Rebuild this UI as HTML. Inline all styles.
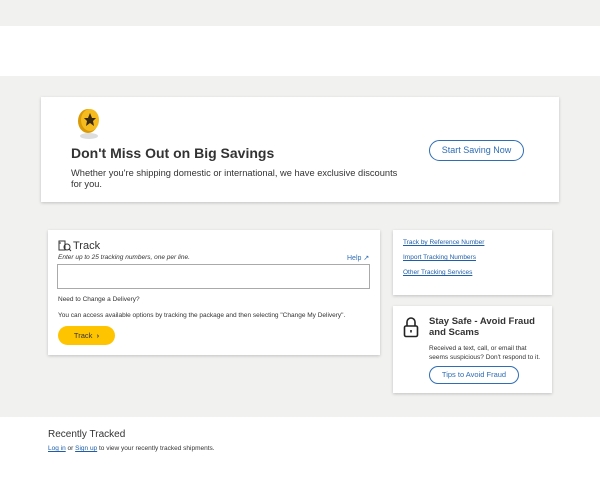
<!DOCTYPE html>
<html><head><style>
*{margin:0;padding:0;box-sizing:border-box}
body{width:600px;height:480px;overflow:hidden;background:#fff;font-family:"Liberation Sans",sans-serif;color:#242424;position:relative}
.g{position:absolute;left:0;width:600px;background:#f1f1f0}
.card{position:absolute;background:#fff;box-shadow:0 1px 3px rgba(0,0,0,.2)}
a{color:#1f5ea8;text-decoration:underline}
.t{position:absolute;white-space:nowrap}
.btn{position:absolute;border:1.5px solid #2f6db5;border-radius:12px;color:#2f6db5;font-size:9px;text-align:center}
</style></head><body>
<div class="g" style="top:0;height:26px"></div>
<div class="g" style="top:76px;height:341px"></div>

<div class="card" style="left:41px;top:97px;width:518px;height:105px">
<svg style="position:absolute;left:34px;top:10px" width="28" height="34" viewBox="0 0 28 34">
<ellipse cx="14" cy="29" rx="9" ry="3" fill="#ddd"/>
<ellipse cx="13" cy="14" rx="10" ry="12" fill="#d99a06"/>
<ellipse cx="15" cy="13" rx="9" ry="11" fill="#f5bb1f"/>
<path d="M15 6l2 5 4 0-3 3 1 5-4-3-4 3 1-5-3-3 4 0z" fill="#3a2a10"/>
</svg>
<div class="t" style="left:30px;top:48px;font-size:14px;font-weight:bold;color:#333">Don't Miss Out on Big Savings</div>
<div class="t" style="left:30px;top:71px;font-size:9.3px;line-height:11px;color:#333">Whether you're shipping domestic or international, we have exclusive discounts<br>for you.</div>
<div class="btn" style="left:388px;top:43px;width:95px;height:21px;line-height:18px">Start Saving Now</div>
</div>

<div class="card" style="left:48px;top:230px;width:332px;height:125px">
<svg style="position:absolute;left:10px;top:10px" width="14" height="12" viewBox="0 0 14 12" fill="none" stroke="#333" stroke-width="1"><path d="M1 1h6v9H1zM1 3h2"/><circle cx="9" cy="7" r="3"/><path d="M11 9l2 2"/></svg>
<div class="t" style="left:25px;top:10px;font-size:11px;color:#333">Track</div>
<div class="t" style="left:10px;top:24px;font-size:6.5px;font-style:italic;color:#333">Enter up to 25 tracking numbers, one per line.</div>
<div class="t" style="left:299px;top:24px;font-size:7px;color:#2f6db5">Help ↗</div>
<div style="position:absolute;left:9px;top:34px;width:313px;height:25px;border:1px solid #aaa"></div>
<div class="t" style="left:10px;top:66px;font-size:6.5px;color:#333">Need to Change a Delivery?</div>
<div class="t" style="left:10px;top:82px;font-size:6.5px;color:#333">You can access available options by tracking the package and then selecting "Change My Delivery".</div>
<div style="position:absolute;left:10px;top:96px;width:57px;height:19px;border-radius:10px;background:#ffc400;font-size:7.5px;line-height:19px;text-align:center;color:#333">Track&nbsp;&nbsp;<b>›</b></div>
</div>

<div class="card" style="left:393px;top:230px;width:159px;height:65px;font-size:6.5px">
<a class="t" style="left:10px;top:9px">Track by Reference Number</a>
<a class="t" style="left:10px;top:24px">Import Tracking Numbers</a>
<a class="t" style="left:10px;top:39px">Other Tracking Services</a>
</div>

<div class="card" style="left:393px;top:306px;width:159px;height:87px">
<svg style="position:absolute;left:10px;top:11px" width="16" height="21" viewBox="0 0 16 21" fill="none" stroke="#222" stroke-width="1.6"><path d="M4 9V5a4 4 0 0 1 8 0v4"/><rect x="1.5" y="9" width="13" height="10.5" rx="1.5"/><path d="M8 13v2.5"/></svg>
<div class="t" style="left:36px;top:10px;font-size:9.5px;font-weight:bold;line-height:11px;color:#333">Stay Safe - Avoid Fraud<br>and Scams</div>
<div class="t" style="left:36px;top:38px;font-size:6.5px;line-height:9px;color:#333">Received a text, call, or email that<br>seems suspicious? Don't respond to it.</div>
<div class="btn" style="left:36px;top:60px;width:90px;height:18px;line-height:15px;font-size:7.5px">Tips to Avoid Fraud</div>
</div>

<div class="t" style="left:48px;top:429px;font-size:10px;color:#333">Recently Tracked</div>
<div class="t" style="left:48px;top:445px;font-size:6.5px;color:#333"><a>Log in</a> or <a>Sign up</a> to view your recently tracked shipments.</div>
</body></html>
